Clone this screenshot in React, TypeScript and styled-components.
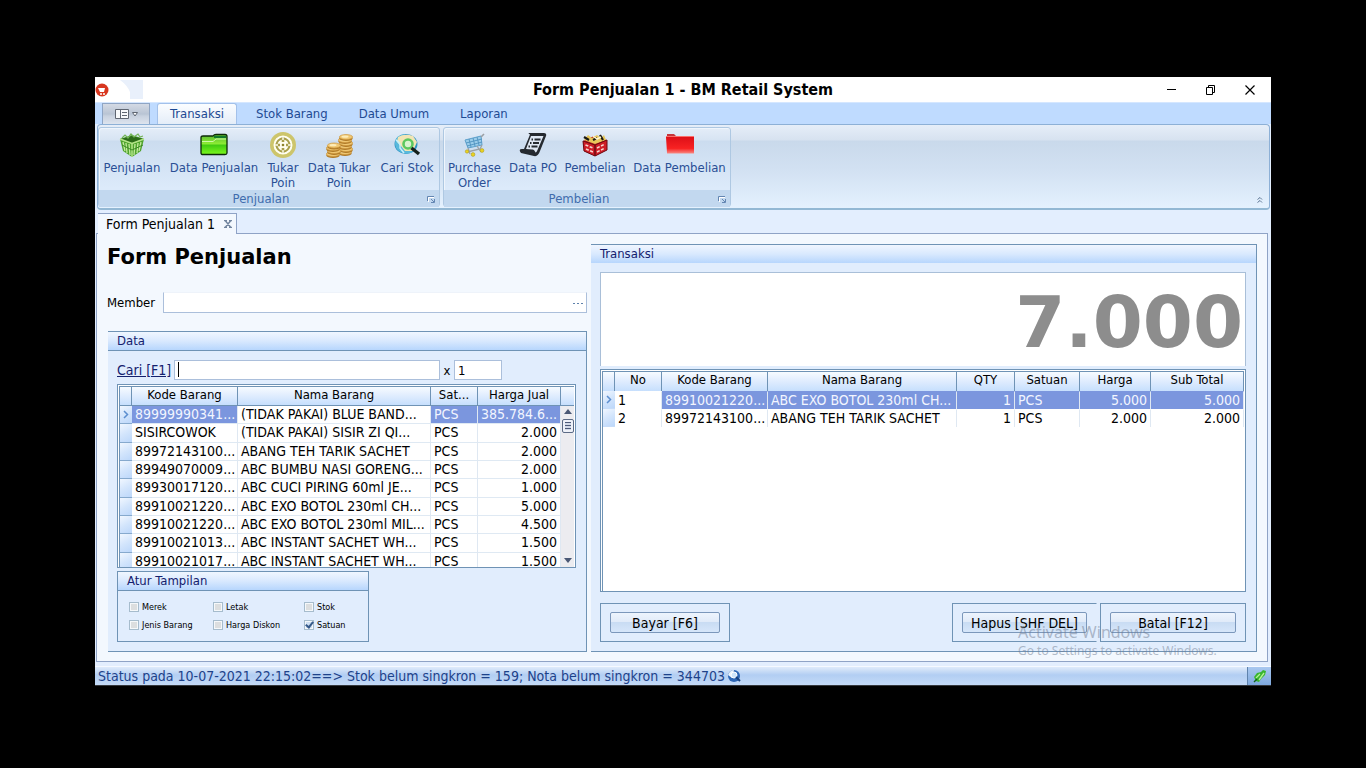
import React from 'react';
import styled, { createGlobalStyle, css } from 'styled-components';

const Global = createGlobalStyle`
  * { box-sizing: border-box; }
  body { margin: 0; background: #000; }
  body, button, input { font-family: "DejaVu Sans Condensed", "DejaVu Sans", Tahoma, sans-serif; font-size: 14px; }
  button { padding: 0; margin: 0; border: 0; background: none; color: inherit; cursor: pointer; }
`;

const headerFill = 'linear-gradient(#f0f6ff, #d9e9fe 50%, #b7d6fd)';
const line = '#6f93b5';

const Page = styled.div`
  padding: 77px 95px;
`;
const Frame = styled.main`
  position: relative;
  min-width: 1100px;
  background: #e3eefe;
  color: #000;
`;

/* Title bar */
const TitleBar = styled.header`
  display: grid;
  grid-template-columns: 1fr auto 1fr;
  align-items: center;
  height: 25px;
  background: #fff;
`;
const TitleLeft = styled.div`
  display: flex;
  gap: 11px;
  align-items: center;
`;
const Title = styled.h1`
  margin: 0;
  font-size: 16px;
  line-height: 24px;
  font-weight: bold;
`;
const WindowButtons = styled.div`
  display: flex;
  justify-content: flex-end;
  padding-right: 2px;
`;
const WindowButton = styled.button`
  display: flex;
  align-items: center;
  justify-content: center;
  width: 39px;
  height: 22px;
`;

/* Ribbon */
const TabBar = styled.nav`
  display: flex;
  gap: 7px;
  height: 22px;
  padding-left: 7px;
  background: #bfdbff;
  border-top: 1px solid #d5e7ff;
  font-size: 13px;
`;
const AppButton = styled.button`
  display: flex;
  align-items: center;
  justify-content: center;
  gap: 2px;
  width: 48px;
  border: 1px solid #8fa5c4;
  border-bottom: 0;
  background: linear-gradient(#d4dae4, #b9c4d4 50%, #c8d1df 60%, #dde4ee);
`;
const RibbonTab = styled.button<{ $active?: boolean }>`
  padding: 0 11px;
  border: 1px solid transparent;
  border-bottom: 0;
  border-radius: 3px 3px 0 0;
  color: #1e4a93;
  font-size: 13px;
  line-height: 20px;
  ${(p) => p.$active && css`
    min-width: 80px;
    border-color: #a3c1ea;
    background: linear-gradient(#fbfdff, #e4edf8);
  `}
`;
const Ribbon = styled.section`
  display: flex;
  gap: 3px;
  height: 86px;
  margin: 0 1px 0 2px;
  padding: 2px 0 1px;
  border: 1px solid #8db0d6;
  border-bottom: 2px solid #93b8d4;
  border-radius: 4px;
  background: linear-gradient(#e6eef8, #d7e2f0 15px, #c9d9eb 16px, #d2e1f2 45px, #e4f1fe);
`;
const Group = styled.div`
  display: flex;
  flex-direction: column;
  border: 1px solid #aec8e2;
  border-radius: 3px;
  background: linear-gradient(#e4edf8, #d7e4f3 12px, #cbdcef 13px, #dceafa 60px);
  box-shadow: inset 1px 1px 0 #eff5fc;
`;
const GroupItems = styled.div`
  display: flex;
  gap: 6px;
  flex: 1;
  padding: 4px 3px 0;
`;
const Tool = styled.button<{ $w: number }>`
  display: flex;
  flex-direction: column;
  align-items: center;
  width: ${(p) => p.$w}px;
  color: #2a4f95;
  font-size: 13px;
  line-height: 15px;
  svg { display: block; margin-bottom: 2px; }
`;
const GroupTitle = styled.div`
  display: grid;
  grid-template-columns: 1fr 16px;
  align-items: center;
  height: 17px;
  background: #c2d8ef;
  color: #3f6cad;
  font-size: 13px;
  line-height: 17px;
  text-align: center;
  svg { margin: 0 auto; }
`;
const RibbonCollapse = styled.button`
  margin-left: auto;
  align-self: flex-end;
  width: 18px;
  height: 16px;
`;

/* Document tabs */
const DocTabs = styled.div`
  display: flex;
  height: 23px;
  padding: 3px 0 0 3px;
`;
const DocTab = styled.div`
  position: relative;
  display: flex;
  align-items: center;
  justify-content: space-between;
  width: 139px;
  height: 21px;
  padding: 0 4px 0 8px;
  border: 1px solid #8fa3c6;
  border-width: 1px 1px 0 0;
  background: #f3f8fe;
  white-space: nowrap;
  svg { display: block; }
`;
const Content = styled.section`
  display: grid;
  grid-template-columns: minmax(0, 480fr) minmax(0, 666fr);
  gap: 4px;
  margin: 0 3px 0 1px;
  padding: 10px 10px 9px;
  border: 1px solid #8fa3c6;
  background: #f3f8fe;
`;
const Column = styled.div`
  display: flex;
  flex-direction: column;
`;
const Heading = styled.h2`
  margin: 0 0 22px;
  font-family: "DejaVu Sans", sans-serif;
  font-size: 21px;
  line-height: 26px;
`;
const Member = styled.div`
  display: flex;
  align-items: center;
  margin-bottom: 18px;
  label { width: 56px; font-size: 13px; line-height: 20px; }
`;
const MemberField = styled.div`
  display: flex;
  flex: 1;
  height: 21px;
  background: #fff;
  border: 1px solid #abbfdb;
  border-top-color: #eef3fa;
  input { flex: 1; min-width: 0; border: 0; outline: 0; background: none; }
  button { width: 16px; color: #5b7aa5; }
`;

/* Titled panels */
const Panel = styled.section<{ $inset?: boolean }>`
  display: flex;
  flex-direction: column;
  flex: 1;
  margin-left: ${(p) => (p.$inset ? 1 : 0)}px;
  border: 1px solid ${line};
  border-left: 0;
  background: #e1edfd;
`;
const PanelTitle = styled.h3<{ $line?: boolean }>`
  margin: 0;
  padding-left: 9px;
  height: ${(p) => (p.$line ? 19 : 18)}px;
  border-bottom: ${(p) => (p.$line ? `1px solid ${line}` : '0')};
  background: ${headerFill};
  color: #14216e;
  font-size: 13px;
  font-weight: normal;
  line-height: 18px;
`;
const PanelBody = styled.div`
  display: flex;
  flex-direction: column;
  flex: 1;
  padding: 9px 10px 9px 9px;
`;
const SearchRow = styled.div`
  display: flex;
  align-items: center;
  height: 20px;
  margin-bottom: 4px;
  label { width: 57px; color: #14216e; text-decoration: underline; white-space: nowrap; font-size: 14px; }
  span { width: 14px; text-align: center; font-size: 13px; }
`;
const FieldWrap = styled.div`
  position: relative;
  flex: 1;
  height: 20px;
`;
const Field = styled.input`
  width: 100%;
  height: 20px;
  padding: 0 3px;
  border: 1px solid #abbfdb;
  outline: 0;
  background: #fff;
  font-size: 13px;
`;
const Quantity = styled(Field)`
  width: 48px;
  margin-right: 74px;
`;
const Caret = styled.i`
  position: absolute;
  left: 4px;
  top: 2px;
  width: 1px;
  height: 15px;
  background: #000;
`;

/* Data grids */
const GridFrame = styled.div<{ $h: number }>`
  height: ${(p) => p.$h}px;
  padding: 1px 1px 0;
  border: 1px solid ${line};
  background: #fff;
`;
const GridInner = styled.div`
  display: flex;
  height: 100%;
  overflow: hidden;
  border: 1px solid ${line};
  border-width: 1px 0 0 1px;
`;
const Grid = styled.table<{ $h?: number }>`
  flex: 1;
  width: 0;
  height: ${(p) => (p.$h ? `${p.$h}px` : 'auto')};
  align-self: flex-start;
  border-collapse: separate;
  border-spacing: 0;
  table-layout: fixed;
  line-height: 17px;
  th, td { padding: 0 3px; overflow: hidden; white-space: nowrap; }
`;
const Head = styled.th<{ $ruled?: boolean }>`
  height: 19px;
  border-right: 1px solid ${line};
  border-bottom: ${(p) => (p.$ruled ? `1px solid ${line}` : '0')};
  background: linear-gradient(#f7fbff, #dfecfe 50%, #c6dffd);
  font-size: 13px;
  font-weight: normal;
  line-height: 16px;
  text-align: center;
  vertical-align: top;
`;
const Cell = styled.td<{ $sel?: boolean; $right?: boolean; $lined?: boolean }>`
  height: 18px;
  border-right: 1px solid #dfe8f2;
  border-bottom: ${(p) => (p.$lined ? '1px solid #dfe9f3' : '0')};
  border-top: ${(p) => (p.$lined ? '0' : '1px solid transparent')};
  background: ${(p) => (p.$sel ? '#7b96de' : '#fff')};
  color: ${(p) => (p.$sel ? '#f2f5ff' : '#000')};
  text-align: ${(p) => (p.$right ? 'right' : 'left')};
`;
const Marker = styled.td<{ $lined?: boolean }>`
  && { padding: 0 2px; }
  height: 18px;
  border-bottom: 1px solid ${(p) => (p.$lined ? '#86a9cd' : '#c6dcf8')};
  background: linear-gradient(150deg, #f1f7ff, #d3e5fc 50%, #bcd7fa);
  svg { display: block; }
`;
const ScrollColumn = styled.div`
  display: flex;
  flex-direction: column;
  align-items: center;
  width: 13px;
  height: 100%;
  background: #ececf0;
`;
const ScrollHead = styled.div`
  width: 13px;
  height: 19px;
  margin-bottom: 3px;
  border-bottom: 1px solid ${line};
  background: linear-gradient(#f7fbff, #dfecfe 50%, #c6dffd);
`;
const Arrow = styled.i<{ $down?: boolean }>`
  margin: ${(p) => (p.$down ? 'auto 0 4px' : '0 0 5px')};
  border: 4px solid transparent;
  border-width: ${(p) => (p.$down ? '5px 4px 0' : '0 4px 5px')};
  border-top-color: ${(p) => (p.$down ? '#4a5875' : 'transparent')};
  border-bottom-color: ${(p) => (p.$down ? 'transparent' : '#4a5875')};
`;
const Thumb = styled.div`
  width: 12px;
  height: 14px;
  padding: 2px;
  border: 1px solid #5c6b86;
  border-radius: 2px;
  background: repeating-linear-gradient(#4d5a78 0 1px, #d3dae8 1px 3px) content-box, #eef1f8;
`;

/* View options */
const Options = styled.fieldset`
  width: 252px;
  margin: 3px 0 0;
  padding: 0;
  border: 1px solid ${line};
`;
const OptionGrid = styled.div`
  display: grid;
  grid-template-columns: 84px 91px 1fr;
  padding: 7px 0 7px 11px;
`;
const Option = styled.label`
  display: flex;
  align-items: center;
  gap: 3px;
  height: 18px;
  font-size: 9px;
`;
const Check = styled.input`
  position: relative;
  appearance: none;
  width: 10px;
  height: 10px;
  margin: 0;
  border: 1px solid #a6bccd;
  background: #dcdedf;
  box-shadow: inset 0 0 0 1px #f5f8fa;
  &:checked { background: #cfe0f3; }
  &:checked::after {
    content: "";
    position: absolute;
    left: 2px;
    top: -1px;
    width: 3px;
    height: 6px;
    border: solid #35598a;
    border-width: 0 2px 2px 0;
    transform: rotate(38deg);
  }
`;

/* Sale */
const Total = styled.output`
  height: 94px;
  margin-bottom: 3px;
  padding-right: 2px;
  border: 1px solid #a9bfd8;
  border-bottom: 0;
  background: #fff;
  color: #8d8d8d;
  font-family: "DejaVu Sans", sans-serif;
  font-size: 72px;
  font-weight: bold;
  line-height: 98px;
  text-align: right;
`;
const Actions = styled.div`
  display: flex;
  gap: 3px;
  margin-top: 11px;
`;
const ActionBox = styled.div<{ $w: number; $push?: boolean; $open?: boolean }>`
  width: ${(p) => p.$w}px;
  height: 39px;
  padding: 8px 9px;
  margin-left: ${(p) => (p.$push ? 'auto' : '0')};
  border: 1px solid ${line};
  border-right-color: ${(p) => (p.$open ? 'transparent' : line)};
`;
const ActionButton = styled.button`
  width: 100%;
  height: 21px;
  border: 1px solid #7b97bb;
  border-radius: 2px;
  background: linear-gradient(#edf4fd, #e1ebf9 45%, #c9dcf3 50%, #d6e6fa);
  color: #000;
  font-size: 14px;
  line-height: 18px;
`;

/* Status bar */
const StatusBar = styled.footer`
  display: flex;
  align-items: center;
  gap: 2px;
  height: 20px;
  margin-top: 4px;
  padding-left: 3px;
  border-top: 1px solid #f5f9ff;
  border-bottom: 1px solid #35383d;
  background: linear-gradient(#dfebfc, #cfe0f7 3px, #b2cef3 8px, #c4daf7);
  color: #1d428a;
  line-height: 18px;
  white-space: nowrap;
`;
const StatusCorner = styled.div`
  display: flex;
  align-items: center;
  justify-content: center;
  width: 24px;
  height: 18px;
  margin-left: auto;
  border-left: 1px solid #5f83ad;
  background: linear-gradient(#a9c8f0, #7fa9de);
`;
const Watermark = styled.div`
  position: absolute;
  right: 48px;
  bottom: 27px;
  width: 205px;
  color: rgba(112, 124, 145, 0.5);
  font-family: "Noto Sans", sans-serif;
  font-size: 12px;
  line-height: 17px;
  white-space: nowrap;
  pointer-events: none;
  strong { display: block; font-size: 16px; font-weight: normal; line-height: 19px; }
`;

const Svg = ({ children, w = 28, h = 26 }: { children: React.ReactNode; w?: number; h?: number }) => (
  <svg width={w} height={h} viewBox={`0 0 ${w} ${h}`} aria-hidden="true">{children}</svg>
);

const BasketIcon = () => (
  <Svg>
    <path d="M2 7 14 3 26 7 23 19 14 25 5 19Z" fill="#4fa32d" />
    <path d="M2 7 14 11 26 7 14 4Z" fill="#2b6a17" />
    <path d="M2 7 14 11.500 26 7M14 11V25" stroke="#b4e588" strokeWidth="1.500" fill="none" />
    <path d="M5 10 7 19M8 11 9 21M11 12 12 23M17 12 16 23M20 11 19 21M23 10 21 19" stroke="#c3eb9e" strokeWidth="1.300" />
    <path d="M4 13 14 18 25 13" stroke="#3a8a22" strokeWidth="1" fill="none" />
    <path d="M4 6 7 3 10 6 13 2 16 5 20 2 22 5 25 4" stroke="#72b355" strokeWidth="1.200" fill="none" />
  </Svg>
);
const GreenFolderIcon = () => (
  <Svg>
    <defs>
      <linearGradient id="gf" x1="0" y1="0" x2="0" y2="1">
        <stop offset="0" stopColor="#57b92f" /><stop offset=".45" stopColor="#8bea34" /><stop offset=".55" stopColor="#43cc12" /><stop offset="1" stopColor="#7df91e" />
      </linearGradient>
    </defs>
    <path d="M1 5.500Q1 4 3 4H13Q14 2.500 16 2.500H25Q27 2.500 27 4.500V21Q27 22.500 25 22.500H3Q1 22.500 1 21Z" fill="url(#gf)" stroke="#0c2b08" strokeWidth="1.300" />
    <path d="M14 4H26V6H14Z" fill="#12792b" />
    <path d="M2 9.500H13L16 7H26" stroke="#d0f9a8" fill="none" />
  </Svg>
);
const TargetIcon = () => (
  <Svg>
    <circle cx="14" cy="13" r="13" fill="#cdc56b" />
    <circle cx="14" cy="13" r="8.500" fill="#a89f4c" stroke="#fffef0" strokeWidth="2" />
    <circle cx="14" cy="13" r="5.500" fill="#fffef0" />
    <path d="M14 5V10M14 16V21M6 13H11M17 13H22" stroke="#a89f4c" strokeWidth="2.600" />
    <path d="M14 4V8M14 18V22M5 13H9M19 13H23" stroke="#fffef0" strokeWidth="1.400" />
    <circle cx="14" cy="13" r="1.300" fill="#8d832c" />
  </Svg>
);
const CoinsIcon = () => {
  const coin = (x: number, y: number, k: string) => (
    <g key={k}>
      <ellipse cx={x} cy={y + 1.4} rx="6.600" ry="2.600" fill="#b07a26" />
      <ellipse cx={x} cy={y} rx="6.600" ry="2.500" fill="#f0c873" stroke="#cf9a40" strokeWidth=".7" />
      <ellipse cx={x - 1} cy={y - 0.3} rx="3.500" ry="1.100" fill="#fdecb8" />
    </g>
  );
  return (
    <Svg>
      {[20, 17, 14, 11, 8, 5].map((y, i) => coin(20 + (i % 2), y, `r${y}`))}
      {[22, 19, 16, 13.500].map((y, i) => coin(8 + (i % 2), y, `l${y}`))}
    </Svg>
  );
};
const SearchGlobeIcon = () => (
  <Svg>
    <ellipse cx="13" cy="12" rx="11.500" ry="10" fill="#2f93c3" />
    <path d="M2 11Q2 3 12 2 10 7 12 11 14 17 20 20 12 24 6 19 2 16 2 11Z" fill="#58b9dc" />
    <path d="M5 5Q12 1 20 4L24 10 20 19 12 19 8 14 4 10Z" fill="#f2e5b4" />
    <path d="M3 8Q8 11 7 16L11 21" stroke="#c9f0fa" strokeWidth="1.500" fill="none" />
    <circle cx="15" cy="12" r="4.500" fill="#d9f3cf" stroke="#5cc85f" strokeWidth="2.600" />
    <path d="M18.500 16 26 22" stroke="#15211b" strokeWidth="3.400" />
  </Svg>
);
const CartIcon = () => (
  <Svg>
    <path d="M4 8 20 4 21 13 7 16Z" fill="#9accea" stroke="#5da0cb" />
    <path d="M5 11 21 7M6 14 21 10M8 7 10 15M12 6 14 14M16 5 18 13" stroke="#4f92c0" strokeWidth=".9" />
    <path d="M20 5 23 2" stroke="#9a9fa4" strokeWidth="1.600" />
    <path d="M21 13 19 17 6 20M7 16 9 22M16 14 20 20" stroke="#9ba1a6" strokeWidth="1.300" fill="none" />
    <g fill="#ead321" stroke="#a4911b" strokeWidth=".5"><circle cx="6" cy="19.500" r="1.700" /><circle cx="12" cy="22.500" r="1.900" /><circle cx="21" cy="18.500" r="1.900" /></g>
  </Svg>
);
const ScrollIcon = () => (
  <Svg>
    <path d="M11 2.500Q8.500 1 10 1H25Q28 1 27 4L21 19Q19 25 15 24L2 21Q-1 17 3 17H5L10 5Z" fill="#252a30" />
    <path d="M12 4H24.500L18.500 18Q17 22 16 19.500 15 17 13 17.500L7 17Z" fill="#dfe8f4" />
    <path d="M12.500 7.500H14M15.500 7.500H21.500M11 11H12.500M14 11H20M9.500 14.500H11M12.500 14.500H18.500" stroke="#252a30" strokeWidth="1.800" />
  </Svg>
);
const CrateIcon = () => (
  <Svg>
    <path d="M2 9 13 4 26 8 25 18 14 24 3 19Z" fill="#b61221" />
    <path d="M3 8 7 3 11 6 16 3 20 6 23 3 25 8 14 12Z" fill="#e7c75a" />
    <path d="M3 5 8 8M19 3 22 8M12 8 16 6" stroke="#1c1a14" strokeWidth="2.200" />
    <path d="M12 4 16 7 20 5" stroke="#fff6cf" strokeWidth="1.500" fill="none" />
    <path d="M2 9 14 13 26 8V18L14 24 3 19Z" fill="#cf1d28" stroke="#6d0b12" strokeWidth="1" />
    <path d="M14 13V24" stroke="#6d0b12" strokeWidth="1.500" />
    <path d="M4.500 13 12 16M5 17 12 20M16 16 24 12M16 20 24 16" stroke="#f6d5cf" strokeWidth="1.600" strokeDasharray="3 1.500" />
  </Svg>
);
const RedFolderIcon = () => (
  <Svg>
    <defs>
      <linearGradient id="rf" x1="0" y1="0" x2="0" y2="1">
        <stop offset="0" stopColor="#dc0f18" /><stop offset=".7" stopColor="#f82222" /><stop offset="1" stopColor="#f88a82" />
      </linearGradient>
    </defs>
    <path d="M1 2H8L10 4H27V6H1Z" fill="#c5353b" />
    <path d="M0 4.500H28V21.500H1Z" fill="url(#rf)" />
    <path d="M0 4.500H28" stroke="#fb6f6b" />
  </Svg>
);
const LauncherIcon = () => (
  <Svg w={8} h={8}>
    <path d="M.5 6V1.500H7M4 4 7 7M7.500 4V7.500H4" stroke="#6386b2" fill="none" />
    <path d="M1.500 7V2.500H7" stroke="#fff" fill="none" />
  </Svg>
);
const RowArrow = () => (
  <Svg w={8} h={9}><path d="M2 1 5.500 4.500 2 8" stroke="#5c8ecf" strokeWidth="1.500" fill="none" /></Svg>
);

const salesTools: [string, number, () => React.ReactElement][] = [
  ['Penjualan', 60, BasketIcon],
  ['Data Penjualan', 92, GreenFolderIcon],
  ['Tukar Poin', 34, TargetIcon],
  ['Data Tukar Poin', 66, CoinsIcon],
  ['Cari Stok', 58, SearchGlobeIcon],
];
const purchaseTools: [string, number, () => React.ReactElement][] = [
  ['Purchase Order', 55, CartIcon],
  ['Data PO', 50, ScrollIcon],
  ['Pembelian', 62, CrateIcon],
  ['Data Pembelian', 95, RedFolderIcon],
];

const ToolGroup = ({ title, tools }: { title: string; tools: typeof salesTools }) => (
  <Group>
    <GroupItems>
      {tools.map(([label, w, Icon]) => (
        <Tool key={label} $w={w}><Icon />{label}</Tool>
      ))}
    </GroupItems>
    <GroupTitle><span>{title}</span><LauncherIcon /></GroupTitle>
  </Group>
);

const products = [
  ['89999990341...', '(TIDAK PAKAI) BLUE BAND...', '385.784.6...'],
  ['SISIRCOWOK', '(TIDAK PAKAI) SISIR ZI QI...', '2.000'],
  ['89972143100...', 'ABANG TEH TARIK SACHET', '2.000'],
  ['89949070009...', 'ABC BUMBU NASI GORENG...', '2.000'],
  ['89930017120...', 'ABC CUCI PIRING 60ml JE...', '1.000'],
  ['89910021220...', 'ABC EXO BOTOL 230ml CH...', '5.000'],
  ['89910021220...', 'ABC EXO BOTOL 230ml MIL...', '4.500'],
  ['89910021013...', 'ABC INSTANT SACHET WH...', '1.500'],
  ['89910021017...', 'ABC INSTANT SACHET WH...', '1.500'],
];
const items = [
  ['1', '89910021220...', 'ABC EXO BOTOL 230ml CH...', '1', 'PCS', '5.000', '5.000'],
  ['2', '89972143100...', 'ABANG TEH TARIK SACHET', '1', 'PCS', '2.000', '2.000'],
];
const itemHeads = ['No', 'Kode Barang', 'Nama Barang', 'QTY', 'Satuan', 'Harga', 'Sub Total'];
const options = ['Merek', 'Letak', 'Stok', 'Jenis Barang', 'Harga Diskon', 'Satuan'];

const Columns = ({ widths }: { widths: (number | undefined)[] }) => (
  <colgroup>{widths.map((w, i) => <col key={i} width={w} />)}</colgroup>
);

export default function App() {
  return (
    <Page>
      <Global />
      <Frame>
        <TitleBar>
          <TitleLeft>
            <Svg w={14} h={14}>
              <circle cx="7" cy="7" r="6.500" fill="#d8371f" />
              <path d="M3 5H10L9 9H5Z" fill="#fff" /><circle cx="6" cy="11" r="1" fill="#fff" /><circle cx="9" cy="11" r="1" fill="#fff" />
            </Svg>
            <Svg w={24} h={20}><path d="M0 0H23V19H10V12Q7 5 0 0Z" fill="#e9f0fb" /></Svg>
          </TitleLeft>
          <Title>Form Penjualan 1 - BM Retail System</Title>
          <WindowButtons>
            <WindowButton aria-label="Minimize"><Svg w={10} h={10}><path d="M0 4.500H9" stroke="#000" /></Svg></WindowButton>
            <WindowButton aria-label="Restore"><Svg w={10} h={10}><path d="M.5 2.500H6.500V9.500H.5ZM2.500 2.500V.5H8.500V7.500H6.500" stroke="#000" fill="none" /></Svg></WindowButton>
            <WindowButton aria-label="Close"><Svg w={10} h={10}><path d="M.5.5 9.500 9.500M9.500.5.5 9.500" stroke="#000" strokeWidth="1.200" /></Svg></WindowButton>
          </WindowButtons>
        </TitleBar>

        <TabBar>
          <AppButton aria-label="Menu">
            <Svg w={16} h={12}>
              <path d="M1.500 1.500H14.500V10.500H1.500ZM6.500 1.500V10.500M8 4.500H13M8 7.500H13" stroke="#5f6672" fill="#f7f9fb" />
            </Svg>
            <Svg w={6} h={5}><path d="M.5.5H5.500L3 4Z" fill="#fff" stroke="#5f6672" /></Svg>
          </AppButton>
          <RibbonTab $active>Transaksi</RibbonTab>
          <RibbonTab>Stok Barang</RibbonTab>
          <RibbonTab>Data Umum</RibbonTab>
          <RibbonTab>Laporan</RibbonTab>
        </TabBar>
        <Ribbon>
          <ToolGroup title="Penjualan" tools={salesTools} />
          <ToolGroup title="Pembelian" tools={purchaseTools} />
          <RibbonCollapse aria-label="Collapse ribbon">
            <Svg w={8} h={8}><path d="M1.500 3.500 4 1.500 6 3.500M1.500 6.500 4 4.500 6 6.500" stroke="#5f7896" fill="none" /></Svg>
          </RibbonCollapse>
        </Ribbon>

        <DocTabs>
          <DocTab>
            Form Penjualan 1
            <button aria-label="Close tab">
              <Svg w={8} h={8}><path d="M0 .5H3M5 .5H8M0 7.500H3M5 7.500H8M1.500 1 6.500 7M6.500 1 1.500 7" stroke="#72859f" strokeWidth="1.400" /></Svg>
            </button>
          </DocTab>
        </DocTabs>
        <Content>
          <Column>
            <Heading>Form Penjualan</Heading>
            <Member>
              <label htmlFor="member">Member</label>
              <MemberField><input id="member" /><button aria-label="Browse members"><Svg w={12} h={6}><path d="M1 1.500H11" stroke="#5f82ac" strokeDasharray="2 2" /></Svg></button></MemberField>
            </Member>
            <Panel $inset>
              <PanelTitle $line>Data</PanelTitle>
              <PanelBody>
                <SearchRow>
                  <label htmlFor="search">Cari [F1]</label>
                  <FieldWrap><Field id="search" /><Caret /></FieldWrap>
                  <span>x</span>
                  <Quantity aria-label="Quantity" defaultValue="1" />
                </SearchRow>
                <GridFrame $h={184}>
                  <GridInner>
                    <Grid $h={184}>
                      <Columns widths={[12, 106, undefined, 47, 83]} />
                      <thead>
                        <tr>
                          <Head $ruled aria-label="Row" />
                          <Head $ruled>Kode Barang</Head><Head $ruled>Nama Barang</Head><Head $ruled>Sat...</Head><Head $ruled>Harga Jual</Head>
                        </tr>
                      </thead>
                      <tbody>
                        {products.map(([code, name, price], i) => (
                          <tr key={i}>
                            <Marker $lined>{i === 0 && <RowArrow />}</Marker>
                            <Cell $lined $sel={i === 0}>{code}</Cell>
                            <Cell $lined>{name}</Cell>
                            <Cell $lined $sel={i === 0}>PCS</Cell>
                            <Cell $lined $right $sel={i === 0}>{price}</Cell>
                          </tr>
                        ))}
                      </tbody>
                    </Grid>
                    <ScrollColumn><ScrollHead /><Arrow /><Thumb /><Arrow $down /></ScrollColumn>
                  </GridInner>
                </GridFrame>
                <Options>
                  <PanelTitle $line>Atur Tampilan</PanelTitle>
                  <OptionGrid>
                    {options.map((o) => (
                      <Option key={o}><Check type="checkbox" defaultChecked={o === 'Satuan'} />{o}</Option>
                    ))}
                  </OptionGrid>
                </Options>
              </PanelBody>
            </Panel>
          </Column>

          <Column>
            <Panel>
              <PanelTitle>Transaksi</PanelTitle>
              <PanelBody>
                <Total>7.000</Total>
                <GridFrame $h={223}>
                  <GridInner>
                    <Grid>
                      <Columns widths={[12, 47, 106, undefined, 58, 65, 71, 93]} />
                      <thead>
                        <tr><Head aria-label="Row" />{itemHeads.map((h) => <Head key={h}>{h}</Head>)}</tr>
                      </thead>
                      <tbody>
                        {items.map((row, i) => (
                          <tr key={i}>
                            <Marker>{i === 0 && <RowArrow />}</Marker>
                            {row.map((v, c) => <Cell key={c} $sel={i === 0 && c > 0} $right={c === 3 || c > 4}>{v}</Cell>)}
                          </tr>
                        ))}
                      </tbody>
                    </Grid>
                  </GridInner>
                </GridFrame>
                <Actions>
                  <ActionBox $w={130}><ActionButton>Bayar [F6]</ActionButton></ActionBox>
                  <ActionBox $w={145} $push $open><ActionButton>Hapus [SHF DEL]</ActionButton></ActionBox>
                  <ActionBox $w={146}><ActionButton>Batal [F12]</ActionButton></ActionBox>
                </Actions>
              </PanelBody>
            </Panel>
          </Column>
        </Content>

        <StatusBar>
          Status pada 10-07-2021 22:15:02==&gt; Stok belum singkron = 159; Nota belum singkron = 344703
          <Svg w={14} h={14}>
            <circle cx="7" cy="7" r="6" fill="#2d66b5" /><path d="M1 6Q3 1 7 1L5 9Z" fill="#e9f2fc" />
            <circle cx="7" cy="6" r="3" fill="#cfe5fa" stroke="#fff" /><path d="M9 8 13 12" stroke="#16407f" strokeWidth="2" />
          </Svg>
          <StatusCorner>
            <Svg w={14} h={14}>
              <path d="M1 8 4 4 8 3 10 1 13 2 12 6 8 10 6 13 3 12Z" fill="#38b52f" /><path d="M3 9 7 5M6 11 11 4" stroke="#b4f394" strokeWidth="1.300" /><path d="M1 13 4 10" stroke="#11661a" strokeWidth="1.500" />
            </Svg>
          </StatusCorner>
        </StatusBar>
        <Watermark><strong>Activate Windows</strong>Go to Settings to activate Windows.</Watermark>
      </Frame>
    </Page>
  );
}
